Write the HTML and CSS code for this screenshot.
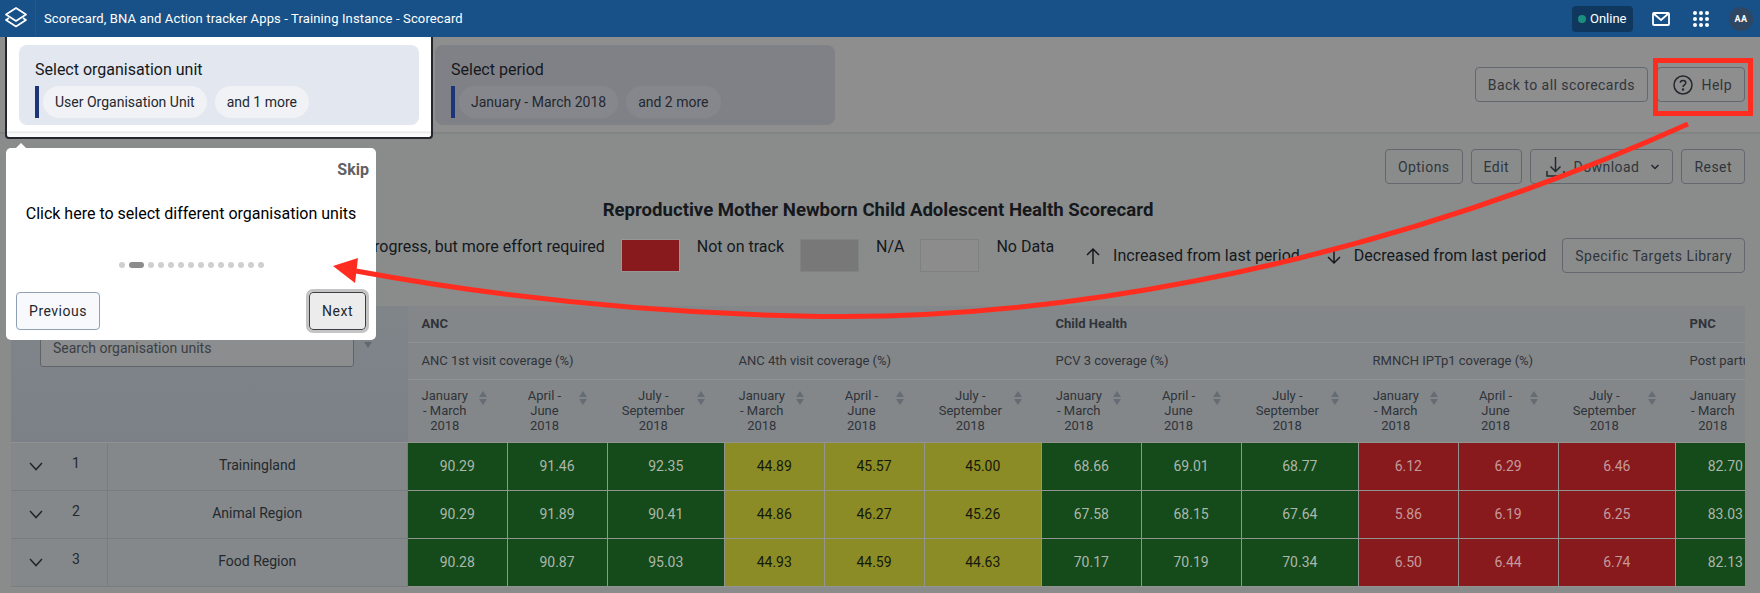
FILE: index.html
```html
<!DOCTYPE html>
<html>
<head>
    <meta charset="UTF-8">
    <meta name="viewport" content="width=device-width, initial-scale=1.0">
    <title>Scorecard</title>
    <link rel="stylesheet" href="styles.css">
</head>
<body>
    <header class="app-header">
      <div class="logo-box">
        <svg width="24" height="24" viewBox="0 0 24 24" fill="none" stroke="#fff" stroke-width="1.7" stroke-linejoin="round">
          <path d="M12 3 L22 9.5 L12 16 L2 9.5 Z"/>
          <path d="M5 13 L2 15 L12 21.5 L22 15 L19 13"/>
        </svg>
      </div>
      <div class="app-title">Scorecard, BNA and Action tracker Apps - Training Instance - Scorecard</div>
      <div class="online-pill"><span class="online-dot"></span>Online</div>
      <svg class="mail-icon" width="18" height="14" viewBox="0 0 18 14" fill="none" stroke="#fff" stroke-width="1.8">
        <rect x="1" y="1" width="16" height="12" rx="1"/>
        <path d="M1.5 1.5 L9 8 L16.5 1.5"/>
      </svg>
      <div class="apps-grid">
        <span></span><span></span><span></span>
        <span></span><span></span><span></span>
        <span></span><span></span><span></span>
      </div>
      <div class="avatar">AA</div>
    </header>

    <section class="filter-bar">
      <div class="highlight-wrap">
        <div class="filter-card highlighted">
          <div class="filter-title">Select organisation unit</div>
          <div class="chip-row">
            <span class="chip-bar"></span>
            <span class="chip">User Organisation Unit</span>
            <span class="chip">and 1 more</span>
          </div>
        </div>
      </div>
      <div class="filter-card dimmed">
        <div class="filter-title">Select period</div>
        <div class="chip-row">
          <span class="chip-bar"></span>
          <span class="chip">January - March 2018</span>
          <span class="chip">and 2 more</span>
        </div>
      </div>
      <div class="filter-actions">
        <button class="btn">Back to all scorecards</button>
        <button class="btn btn-icon">
          <svg width="20" height="20" viewBox="0 0 20 20" fill="none" stroke="#23282e" stroke-width="1.5">
            <circle cx="10" cy="10" r="9"/>
            <path d="M7.3 7.8 C7.3 4.6 12.8 4.6 12.8 7.8 C12.8 9.8 10 9.8 10 12"/>
            <circle cx="10" cy="14.6" r="0.5"/>
          </svg>
          Help
        </button>
      </div>
    </section>

    <main class="content">
      <div class="toolbar">
        <button class="btn">Options</button>
        <button class="btn">Edit</button>
        <button class="btn btn-icon">
          <svg width="19" height="22" viewBox="0 0 19 22" fill="none" stroke="#23282e" stroke-width="1.5">
            <path d="M9.5 1 V15 M4.5 10.5 L9.5 15.5 L14.5 10.5"/>
            <path d="M1 15 V20 H18 V15"/>
          </svg>
          Download
          <svg class="btn-caret" width="10" height="6" viewBox="0 0 10 6" fill="none" stroke="#23282e" stroke-width="1.5">
            <path d="M1.5 1 L5 4.5 L8.5 1"/>
          </svg>
        </button>
        <button class="btn">Reset</button>
      </div>

      <h1 class="score-title">Reproductive Mother Newborn Child Adolescent Health Scorecard</h1>

      <div class="legend">
        <div class="legend-item"><span>Progress, but more effort required</span></div>
        <div class="legend-item"><span class="swatch swatch-red"></span><span>Not on track</span></div>
        <div class="legend-item"><span class="swatch swatch-grey"></span><span>N/A</span></div>
        <div class="legend-item"><span class="swatch swatch-empty"></span><span>No Data</span></div>
        <div class="trend trend-up">
          <svg width="20" height="20" viewBox="0 0 20 20" fill="none" stroke="#15181c" stroke-width="1.5">
            <path d="M10 18 V3 M4 9 L10 3 L16 9"/>
          </svg>
          Increased from last period
        </div>
        <div class="trend trend-down">
          <svg width="20" height="20" viewBox="0 0 20 20" fill="none" stroke="#15181c" stroke-width="1.5">
            <path d="M10 2 V17 M4 11 L10 17 L16 11"/>
          </svg>
          Decreased from last period
        </div>
        <button class="btn">Specific Targets Library</button>
      </div>

      <div class="table-wrap">
        <table class="score-table">
          <colgroup>
            <col class="col-expand"><col class="col-name">
            <col class="col-a"><col class="col-b"><col class="col-c">
            <col class="col-a"><col class="col-b"><col class="col-c">
            <col class="col-a"><col class="col-b"><col class="col-c">
            <col class="col-a"><col class="col-b"><col class="col-c">
            <col class="col-a">
          </colgroup>
          <thead>
            <tr class="group-row">
              <th class="search-cell" colspan="2" rowspan="3">
                <div class="search-row">
                  <div class="search-input">Search organisation units</div>
                  <span class="search-caret"></span>
                </div>
              </th>
              <th colspan="6">ANC</th>
              <th colspan="6">Child Health</th>
              <th>PNC</th>
            </tr>
            <tr class="indicator-row">
              <th colspan="3">ANC 1st visit coverage (%)</th>
              <th colspan="3">ANC 4th visit coverage (%)</th>
              <th colspan="3">PCV 3 coverage (%)</th>
              <th colspan="3">RMNCH IPTp1 coverage (%)</th>
              <th class="clipped">Post partum care coverage (%)</th>
            </tr>
            <tr class="period-row">
              <th><div class="period"><span>January - March 2018</span><i class="sort"></i></div></th>
              <th><div class="period"><span>April - June 2018</span><i class="sort"></i></div></th>
              <th><div class="period"><span>July - September 2018</span><i class="sort"></i></div></th>
              <th><div class="period"><span>January - March 2018</span><i class="sort"></i></div></th>
              <th><div class="period"><span>April - June 2018</span><i class="sort"></i></div></th>
              <th><div class="period"><span>July - September 2018</span><i class="sort"></i></div></th>
              <th><div class="period"><span>January - March 2018</span><i class="sort"></i></div></th>
              <th><div class="period"><span>April - June 2018</span><i class="sort"></i></div></th>
              <th><div class="period"><span>July - September 2018</span><i class="sort"></i></div></th>
              <th><div class="period"><span>January - March 2018</span><i class="sort"></i></div></th>
              <th><div class="period"><span>April - June 2018</span><i class="sort"></i></div></th>
              <th><div class="period"><span>July - September 2018</span><i class="sort"></i></div></th>
              <th><div class="period"><span>January - March 2018</span><i class="sort"></i></div></th>
            </tr>
          </thead>
          <tbody>
            <tr>
              <td class="expand-cell"><div class="expand"><svg width="14" height="9" viewBox="0 0 14 9" fill="none" stroke="#23282e" stroke-width="1.6"><path d="M1 1 L7 7.5 L13 1"/></svg><span>1</span></div></td>
              <td class="name-cell">Trainingland</td>
              <td class="green">90.29</td><td class="green">91.46</td><td class="green">92.35</td>
              <td class="yellow">44.89</td><td class="yellow">45.57</td><td class="yellow">45.00</td>
              <td class="green">68.66</td><td class="green">69.01</td><td class="green">68.77</td>
              <td class="red">6.12</td><td class="red">6.29</td><td class="red">6.46</td>
              <td class="green">82.70</td>
            </tr>
            <tr>
              <td class="expand-cell"><div class="expand"><svg width="14" height="9" viewBox="0 0 14 9" fill="none" stroke="#23282e" stroke-width="1.6"><path d="M1 1 L7 7.5 L13 1"/></svg><span>2</span></div></td>
              <td class="name-cell">Animal Region</td>
              <td class="green">90.29</td><td class="green">91.89</td><td class="green">90.41</td>
              <td class="yellow">44.86</td><td class="yellow">46.27</td><td class="yellow">45.26</td>
              <td class="green">67.58</td><td class="green">68.15</td><td class="green">67.64</td>
              <td class="red">5.86</td><td class="red">6.19</td><td class="red">6.25</td>
              <td class="green">83.03</td>
            </tr>
            <tr>
              <td class="expand-cell"><div class="expand"><svg width="14" height="9" viewBox="0 0 14 9" fill="none" stroke="#23282e" stroke-width="1.6"><path d="M1 1 L7 7.5 L13 1"/></svg><span>3</span></div></td>
              <td class="name-cell">Food Region</td>
              <td class="green">90.28</td><td class="green">90.87</td><td class="green">95.03</td>
              <td class="yellow">44.93</td><td class="yellow">44.59</td><td class="yellow">44.63</td>
              <td class="green">70.17</td><td class="green">70.19</td><td class="green">70.34</td>
              <td class="red">6.50</td><td class="red">6.44</td><td class="red">6.74</td>
              <td class="green">82.13</td>
            </tr>
          </tbody>
        </table>
      </div>
    </main>

    <!-- tour popover -->
    <div class="tour">
      <div class="tour-skip">Skip</div>
      <div class="tour-text">Click here to select different organisation units</div>
      <div class="tour-dots">
        <span></span><span class="active"></span>
        <span></span><span></span><span></span><span></span><span></span><span></span>
        <span></span><span></span><span></span><span></span><span></span><span></span>
      </div>
      <div class="tour-actions">
        <button class="tour-btn">Previous</button>
        <button class="tour-btn tour-next">Next</button>
      </div>
    </div>

    <!-- red annotation drawn on top of the screenshot -->
    <svg class="annotation" width="1760" height="593" viewBox="0 0 1760 593" fill="none">
      <rect x="1655.5" y="60.5" width="95" height="53" stroke="#ff2d20" stroke-width="5"/>
      <path d="M356 271 C470 292 620 312 800 316 C1020 322 1340 280 1688 124" stroke="#ff2d20" stroke-width="5"/>
      <path d="M333 266 L358 258 L355 283 Z" fill="#ff2d20"/>
    </svg>
</body>
</html>
```

FILE: styles.css
```css
* {
  box-sizing: border-box;
}

html, body {
  margin: 0;
  height: 593px;
  overflow: hidden;
}

body {
  position: relative;
  background: #8a8c8b;
  font-family: Roboto, "Liberation Sans", sans-serif;
  color: #15181c;
}

/* top bar */
.app-header {
  position: relative;
  z-index: 3;
  display: flex;
  align-items: center;
  height: 37px;
  background: #185187;
  color: #fff;
}

.logo-box {
  display: flex;
  align-items: center;
  justify-content: center;
  width: 36px;
  height: 37px;
  padding: 0 4px 4px 0;
  border-right: 1px solid #1e5a92;
}

.app-title {
  margin-left: 8px;
  font-size: 13px;
  letter-spacing: 0.13px;
  flex: 1;
}

.online-pill {
  display: flex;
  align-items: center;
  gap: 4px;
  width: 61px;
  height: 26px;
  padding-left: 6px;
  border-radius: 4px;
  background: #10385f;
  font-size: 13px;
}

.online-dot {
  width: 8px;
  height: 8px;
  border-radius: 50%;
  background: #1b8f7f;
}

.mail-icon {
  margin-left: 19px;
}

.apps-grid {
  display: grid;
  grid-template-columns: repeat(3, 4px);
  gap: 2px;
  margin-left: 23px;
}

.apps-grid span {
  width: 4px;
  height: 4px;
  border-radius: 50%;
  background: #fff;
}

.avatar {
  display: flex;
  align-items: center;
  justify-content: center;
  width: 24px;
  height: 24px;
  margin: 0 7px 0 20px;
  border-radius: 50%;
  background: #2f4763;
  font-size: 9px;
  font-weight: 700;
  letter-spacing: 0.5px;
}

/* filter row */
.filter-bar {
  display: flex;
  align-items: center;
  gap: 16px;
  height: 97px;
  padding: 0 15px 0 19px;
  border-bottom: 2px solid #828383;
  background: #8e8e8e;
}

.highlight-wrap {
  position: relative;
  z-index: 1;
}

.highlight-wrap::before {
  content: "";
  position: absolute;
  z-index: -1;
  top: -10px;
  left: -14px;
  right: -14px;
  bottom: -14px;
  border: 2px solid #23262b;
  border-top: 0;
  border-radius: 0 0 4px 4px;
  background: linear-gradient(#fff 96px, #e6e6e6 97px, #fbfbfb 99px);
}

.filter-card {
  width: 400px;
  height: 80px;
  padding: 15px 16px 0;
  border-radius: 8px;
  background: #808187;
}

.filter-card.highlighted {
  background: #e3e7ef;
}

.filter-card.highlighted .chip {
  background: #f0f2f6;
}

.filter-title {
  font-size: 16px;
  line-height: 20px;
}

.chip-row {
  display: flex;
  gap: 8px;
  margin-top: 6px;
}

.chip-bar {
  width: 4px;
  height: 32px;
  margin-right: -4px;
  background: #1d3578;
}

.chip {
  display: flex;
  align-items: center;
  height: 32px;
  padding: 0 12px;
  border-radius: 16px;
  background: #86878d;
  font-size: 14px;
  color: #23282e;
}

.filter-actions {
  display: flex;
  gap: 9px;
  margin-left: auto;
}

.btn {
  display: flex;
  align-items: center;
  gap: 9px;
  height: 35px;
  padding: 0 12px;
  border: 1px solid #63686e;
  border-radius: 4px;
  background: transparent;
  font: 14px Roboto, sans-serif;
  letter-spacing: 0.45px;
  color: #30353c;
}

.btn-icon {
  padding-left: 14.5px;
}

.btn-caret {
  margin-left: 2px;
}

/* scorecard */
.content {
  padding: 15px 15px 7px 11px;
}

.toolbar {
  display: flex;
  justify-content: flex-end;
  gap: 8px;
}

.score-title {
  margin: 15px 0 0;
  text-align: center;
  font-size: 18.6px;
  line-height: 22px;
  font-weight: 700;
}

.legend {
  display: flex;
  justify-content: flex-end;
  align-items: flex-start;
  gap: 16px;
  height: 35px;
  margin-top: 17px;
  font-size: 16px;
}

.legend-item {
  display: flex;
  gap: 17px;
  line-height: 18px;
}

.swatch {
  width: 59px;
  height: 33px;
  margin-top: 1px;
}

.swatch-red {
  background: #88191c;
  border: 1px solid #979797;
}

.swatch-grey {
  background: #787878;
  border: 1px solid #808282;
}

.swatch-empty {
  background: #8c8c8c;
  border: 1px solid #7f8181;
}

.trend {
  display: flex;
  align-items: center;
  gap: 10px;
  height: 35px;
}

.trend-up {
  margin-left: 13px;
}

.trend-down {
  margin-left: 8px;
}

/* table */
.table-wrap {
  width: 1734px;
  margin-top: 33px;
  overflow: hidden;
}

.score-table {
  width: 1764px;
  table-layout: fixed;
  border-collapse: collapse;
  background: #85888a;
  font-size: 13px;
}

.col-expand { width: 96px; }
.col-name { width: 300.5px; }
.col-a { width: 99.5px; }
.col-b { width: 100px; }
.col-c { width: 117.5px; }

.score-table th {
  padding: 0 14px;
  font-weight: 400;
  text-align: left;
  color: #2f333a;
  background: #848789;
}

.group-row th {
  height: 36px;
  font-weight: 700;
  border-bottom: 1px solid #8f9192;
}

.indicator-row th {
  height: 37px;
  border-bottom: 1px solid #8f9192;
}

.period-row th {
  height: 63px;
  padding-right: 19px;
  line-height: 15px;
}

.clipped {
  white-space: nowrap;
}

.score-table th.search-cell {
  padding: 0;
  vertical-align: top;
  font-weight: 400;
  background: linear-gradient(#80858a, #7b8187);
}

.search-row {
  display: flex;
  align-items: flex-end;
  gap: 10px;
  padding: 20px 0 0 29px;
}

.search-input {
  width: 314px;
  height: 41px;
  padding: 13px 12px 0;
  border: 1px solid #5f6469;
  border-radius: 3px;
  background: #8c8d8e;
  font-size: 14px;
  color: #3a3f45;
}

.search-caret {
  width: 0;
  height: 0;
  margin-bottom: 19px;
  border-left: 4px solid transparent;
  border-right: 4px solid transparent;
  border-top: 6px solid #636870;
}

.period {
  display: flex;
  align-items: center;
  gap: 10px;
}

.period span {
  flex: 1;
  text-align: center;
}

.sort {
  position: relative;
  width: 10px;
  height: 14px;
  margin-top: -26px;
}

.sort::before,
.sort::after {
  content: "";
  position: absolute;
  left: 1px;
  border-left: 4px solid transparent;
  border-right: 4px solid transparent;
}

.sort::before {
  top: 0;
  border-bottom: 6px solid #666c74;
}

.sort::after {
  bottom: 0;
  border-top: 6px solid #666c74;
}

.score-table td {
  height: 48px;
  padding: 0;
  text-align: center;
  font-size: 14px;
  border: 1px solid #92948f;
}

.score-table td.expand-cell,
.score-table td.name-cell {
  border-color: #7a7d80;
  border-left: 0;
  background: #85888a;
  color: #23282e;
}

.score-table td.name-cell {
  padding-bottom: 2px;
}

.expand {
  display: flex;
  align-items: center;
  padding-left: 18px;
  gap: 29px;
}

.expand span {
  margin-bottom: 6px;
}

.green {
  background: #154a1a;
  color: #acb7ab;
}

.yellow {
  background: #8b8c25;
  color: #16180c;
}

.red {
  background: #88191c;
  color: #c49a9b;
}

/* tour popover */
.tour {
  position: absolute;
  z-index: 4;
  top: 148px;
  left: 6px;
  display: flex;
  flex-direction: column;
  width: 370px;
  height: 192px;
  padding: 14px 10px 10px;
  border-radius: 5px;
  background: #fff;
}

.tour::before {
  content: "";
  position: absolute;
  top: -5px;
  left: 10px;
  border-left: 5px solid transparent;
  border-right: 5px solid transparent;
  border-bottom: 5px solid #fff;
}

.tour-skip {
  align-self: flex-end;
  margin-right: -3px;
  font-size: 16px;
  font-weight: 700;
  line-height: 16px;
  color: #616161;
}

.tour-text {
  margin-top: 26px;
  text-align: center;
  font-size: 16px;
  line-height: 20px;
  color: #000;
}

.tour-dots {
  display: flex;
  justify-content: center;
  align-items: center;
  gap: 4px;
  margin-top: 38px;
}

.tour-dots span {
  width: 6px;
  height: 6px;
  border-radius: 3px;
  background: #cfcfcf;
}

.tour-dots span.active {
  width: 15px;
  background: #8c8c8c;
}

.tour-actions {
  display: flex;
  justify-content: space-between;
  margin-top: auto;
}

.tour-btn {
  height: 38px;
  padding: 0 12px;
  border: 1px solid #8fa0b5;
  border-radius: 4px;
  background: #f7f9fc;
  font: 14px Roboto, sans-serif;
  letter-spacing: 0.5px;
  color: #23282e;
  min-width: 84px;
}

.tour-next {
  min-width: 57px;
  border-color: #3c3f44;
  background: #ececec;
  outline: 3px solid #c4c4c4;
}

.annotation {
  position: absolute;
  z-index: 5;
  top: 0;
  left: 0;
  pointer-events: none;
}
```
